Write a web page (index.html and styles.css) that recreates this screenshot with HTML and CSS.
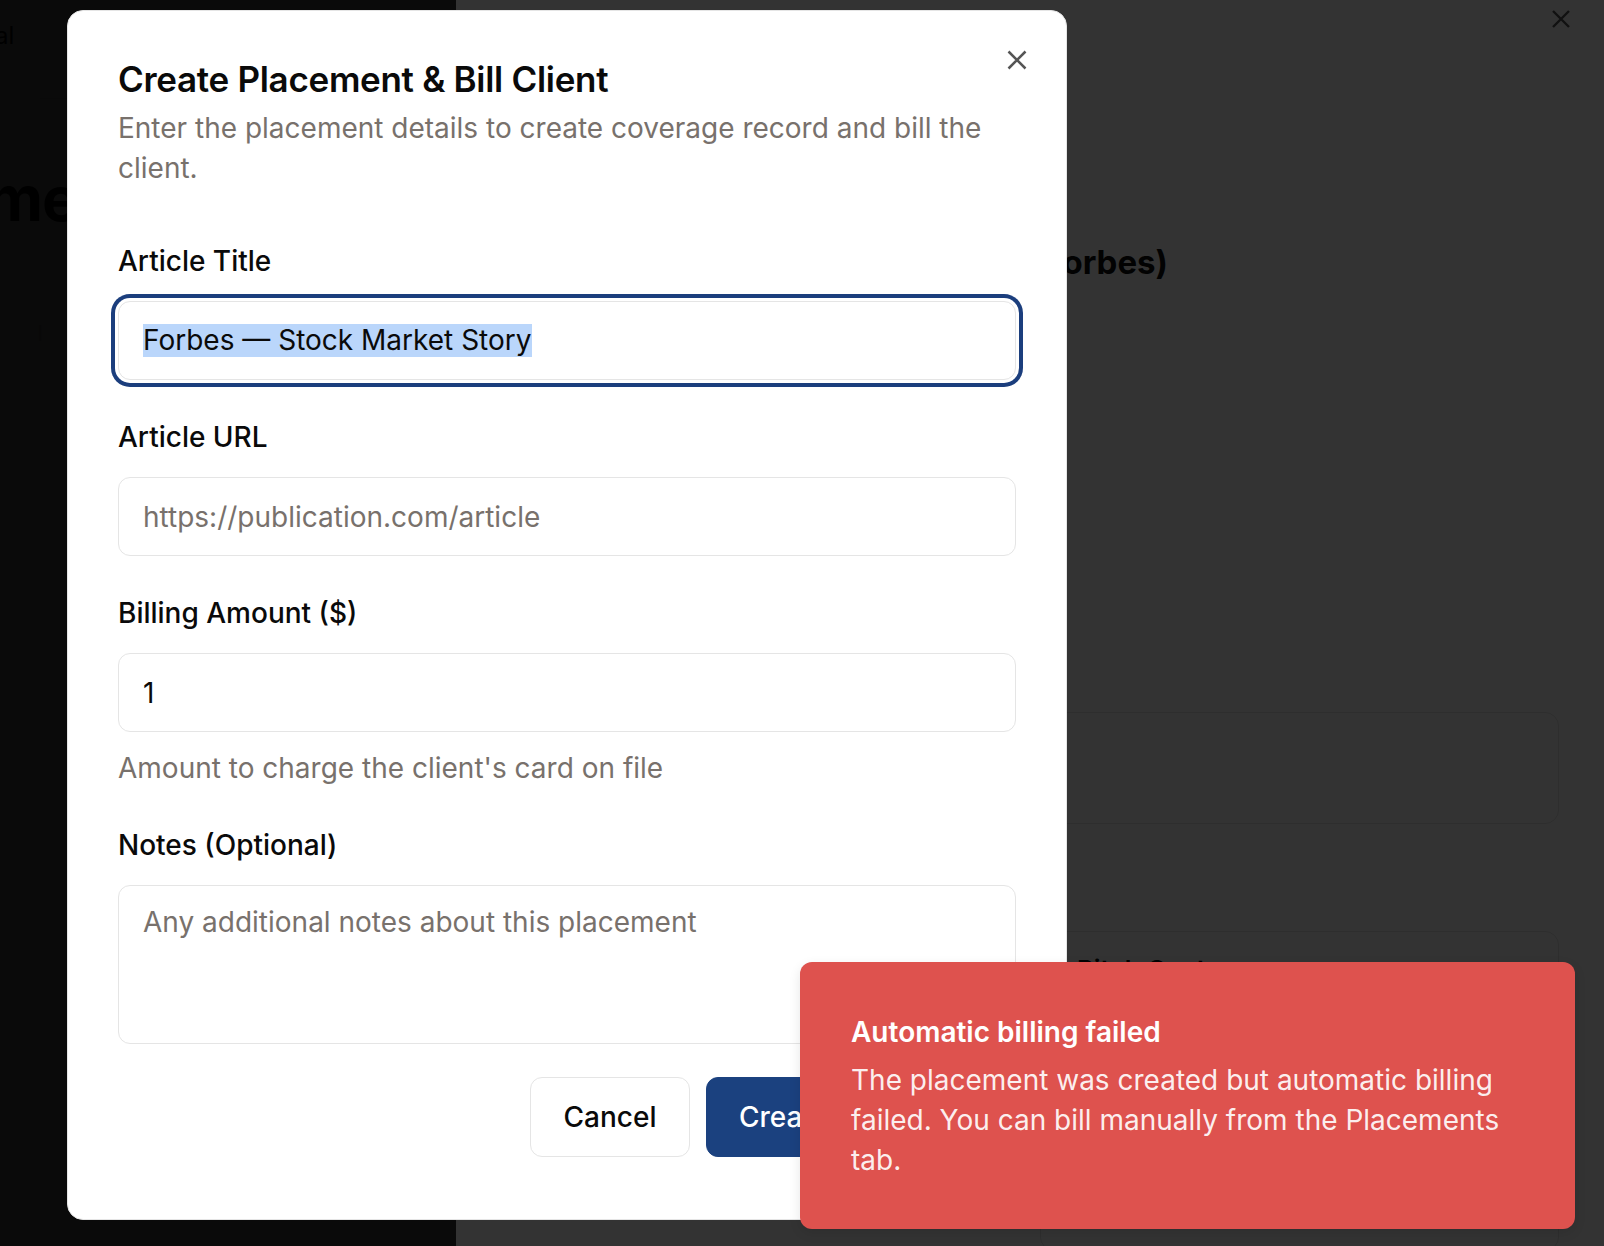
FILE: index.html
```html
<!DOCTYPE html>
<html lang="en">
<head>
<meta charset="utf-8">
<title>Create Placement &amp; Bill Client</title>
<link rel="stylesheet" href="styles.css">
</head>
<body>
  <div class="page">
    <div class="page-brand">Portal</div>
    <div class="page-rule"></div>
    <div class="page-title">Welcome</div>
    <div class="page-tabs"><span class="page-tab">Placement</span><span class="page-tab-sep">l</span></div>
  </div>
  <div class="overlay"></div>

  <aside class="sheet">
    <svg class="sheet-close" viewBox="0 0 20 20" width="20" height="20" aria-hidden="true"><path d="M2 2 18 18M18 2 2 18"/></svg>
    <div class="sheet-heading-wrap"><h2 class="sheet-heading">Stock Market Story (Forbes)</h2></div>
    <div class="sheet-col">
      <div class="sheet-card sheet-card-a"></div>
      <div class="sheet-card sheet-card-b"><span class="sheet-card-label">Pitch Cost</span></div>
    </div>
  </aside>
  <div class="overlay"></div>

  <div class="dialog" role="dialog">
    <svg class="dialog-close" viewBox="0 0 20 20" width="20" height="20" aria-hidden="true"><path d="M1.5 1.5 18.5 18.5M18.5 1.5 1.5 18.5"/></svg>
    <h1 class="dialog-title">Create Placement &amp; Bill Client</h1>
    <p class="dialog-desc">Enter the placement details to create coverage record and bill the client.</p>
    <div class="form">
      <div class="field">
        <div class="label">Article Title</div>
        <div class="input input-focus"><span class="selected">Forbes — Stock Market Story</span></div>
      </div>
      <div class="field">
        <div class="label">Article URL</div>
        <div class="input placeholder">https://publication.com/article</div>
      </div>
      <div class="field">
        <div class="label">Billing Amount ($)</div>
        <div class="input">1</div>
        <div class="helper">Amount to charge the client's card on file</div>
      </div>
      <div class="field field-last">
        <div class="label">Notes (Optional)</div>
        <div class="textarea placeholder">Any additional notes about this placement</div>
      </div>
    </div>
    <div class="footer">
      <button class="btn btn-outline">Cancel</button>
      <button class="btn btn-primary">Create &amp; Bill Client</button>
    </div>
  </div>

  <div class="toast" role="status">
    <div class="toast-title">Automatic billing failed</div>
    <div class="toast-body">The placement was created but automatic billing failed. You can bill manually from the Placements tab.</div>
  </div>
</body>
</html>
```
FILE: styles.css
```css
* { box-sizing: border-box; }
html, body { margin: 0; padding: 0; }
body {
  width: 1604px;
  height: 1246px;
  overflow: hidden;
  position: relative;
  background: #ffffff;
  font-family: Inter, "Noto Sans", "Liberation Sans", sans-serif;
  color: #0a0a0a;
}

/* background page */
.page { padding-top: 18px; margin-left: -52px; }
.page-brand { font-size: 24px; line-height: 36px; color: #0a0a0a; }
.page-rule { margin: 44px 0 0 92px; width: 30px; border-top: 1px solid #e5e5e5; }
.page-title { margin: 60px 0 0 -146px; font-size: 62px; font-weight: 700; line-height: 80px; letter-spacing: -1px; }
.page-tabs { margin: 76px 0 0 -60px; font-size: 22px; line-height: 36px; display: flex; gap: 40px; }
.page-tab-sep { color: #d4d4d4; }

.overlay { position: absolute; inset: 0; background: rgba(0, 0, 0, 0.8); }

/* side sheet behind the dialog */
.sheet {
  position: absolute;
  left: 456px; top: 0;
  width: 1148px; height: 1246px;
  background: #ffffff;
  padding-top: 242px;
}
.sheet-close { position: absolute; left: 1095px; top: 9px; stroke: #555; stroke-width: 2.4; fill: none; }
.sheet-heading-wrap { width: 712px; text-align: right; white-space: nowrap; }
.sheet-heading { margin: 0; font-size: 33px; font-weight: 700; line-height: 40px; color: #0a0a0a; }
.sheet-col { margin-left: 584px; width: 519px; }
.sheet-card { border: 1px solid #e5e5e5; border-radius: 14px; }
.sheet-card-a { margin-top: 430px; height: 112px; }
.sheet-card-b { margin-top: 107px; height: 320px; padding: 20px 36px; }
.sheet-card-label { font-size: 26px; font-weight: 600; line-height: 36px; }

/* dialog */
.dialog {
  position: absolute;
  left: 67px; top: 10px;
  width: 1000px; height: 1210px;
  background: #ffffff;
  border: 1px solid #e5e5e5;
  border-radius: 16px;
  padding: 50px 50px 0;
}
.dialog-close { position: absolute; left: 939px; top: 39px; stroke: #555; stroke-width: 2.5; fill: none; }
.dialog-title { margin: 0; font-size: 35px; line-height: 36px; font-weight: 600; letter-spacing: -0.3px; }
.dialog-desc { margin: 11px 0 0; font-size: 28px; line-height: 40px; color: #78716c; }
.form { margin-top: 55px; display: flex; flex-direction: column; gap: 39px; }
.field { display: block; }
.label { font-size: 28px; font-weight: 500; line-height: 36px; margin-bottom: 22px; }
.input {
  height: 79px;
  border: 1px solid #e5e5e5;
  border-radius: 12px;
  padding: 0 24px;
  display: flex;
  align-items: center;
  font-size: 28px;
  color: #0a0a0a;
  background: #fff;
}
.input-focus { box-shadow: 0 0 0 3px #ffffff, 0 0 0 7px #1b3e7d; }
.selected { background: #bad6fb; line-height: 33px; }
.placeholder { color: #78716c; }
.helper { margin: 18px 0 2px; font-size: 28px; line-height: 36px; color: #78716c; }
.textarea {
  height: 159px;
  border: 1px solid #e5e5e5;
  border-radius: 12px;
  padding: 18px 24px;
  font-size: 28px;
  line-height: 36px;
}
.footer { margin-top: 33px; display: flex; justify-content: flex-end; gap: 16px; }
.btn {
  height: 80px;
  border-radius: 12px;
  font-family: inherit;
  font-size: 28px;
  font-weight: 500;
  padding: 0 32px;
  cursor: pointer;
  white-space: nowrap;
  overflow: hidden;
}
.btn-outline { width: 160px; background: #fff; border: 1px solid #e5e5e5; color: #0a0a0a; text-align: center; }
.btn-primary { width: 310px; background: #1b417f; border: 1px solid #1b417f; color: #ffffff; text-align: left; }

/* toast */
.toast {
  position: absolute;
  left: 800px; top: 962px;
  width: 775px; height: 267px;
  background: #de524e;
  border-radius: 12px;
  padding: 52px 50px 0 51px;
  color: #ffffff;
  box-shadow: 0 4px 12px rgba(0, 0, 0, 0.1);
}
.toast-title { font-size: 28px; font-weight: 600; line-height: 36px; }
.toast-body { margin-top: 10px; font-size: 28px; line-height: 40px; color: rgba(255, 255, 255, 0.92); }
```
